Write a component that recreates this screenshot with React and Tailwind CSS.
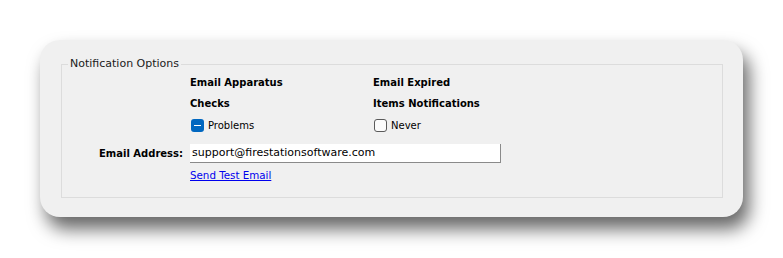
import React from 'react';

const font = { fontFamily: '"DejaVu Sans", Verdana, sans-serif' };

const App = () => {
    return (
        <div className="min-h-screen bg-white pt-[40px] pl-[40px] text-black" style={font}>
            <div className="w-[703px] h-[177px] rounded-[20px] bg-[#f0f0f0] shadow-[6px_12px_18px_rgba(0,0,0,0.6)] pt-[17px] pl-[21px]">
                <fieldset className="w-[662px] h-[141px] border border-[#dcdcdc] m-0 p-0">
                    <legend className="ml-[6px] px-[2px] text-[11px] leading-[14px] text-[#1a1a1a]">Notification Options</legend>
                    <div className="grid grid-cols-[128px_183px_1fr] text-[11px] leading-[13px] mt-[1px]">
                        <div />
                        <div className="font-bold text-[10px] h-[21px] flex items-center">Email Apparatus</div>
                        <div className="font-bold text-[10px] h-[21px] flex items-center">Email Expired</div>

                        <div />
                        <div className="font-bold text-[10px] h-[21px] flex items-center">Checks</div>
                        <div className="font-bold text-[10px] h-[21px] flex items-center">Items Notifications</div>

                        <div />
                        <label className="h-[23px] flex items-center gap-[4px] pl-[1px] text-[10px]">
                            <span className="w-[13px] h-[13px] rounded-[3px] bg-[#0067c0] flex items-center justify-center">
                                <span className="w-[7px] h-[1.5px] bg-white" />
                            </span>
                            Problems
                        </label>
                        <label className="h-[23px] flex items-center gap-[4px] pl-[1px] text-[10px]">
                            <span className="w-[13px] h-[13px] rounded-[3px] border border-[#5a5a5a] bg-[#fbfbfb]" />
                            Never
                        </label>

                        <div className="font-bold text-[10px] h-[32px] flex items-center justify-end pr-[7px]">Email Address:</div>
                        <div className="col-span-2 h-[32px] flex items-center">
                            <input
                                className="w-[311px] h-[19px] bg-white border-0 border-b border-r border-[#8a8a8a] px-[2px] text-[11px] outline-none"
                                style={font}
                                defaultValue="support@firestationsoftware.com"
                            />
                        </div>

                        <div />
                        <div className="col-span-2 h-[13px] flex items-center">
                            <a href="#" className="text-[#0000ee] underline text-[10.3px]">Send Test Email</a>
                        </div>
                    </div>
                </fieldset>
            </div>
        </div>
    );
};

export default App;
